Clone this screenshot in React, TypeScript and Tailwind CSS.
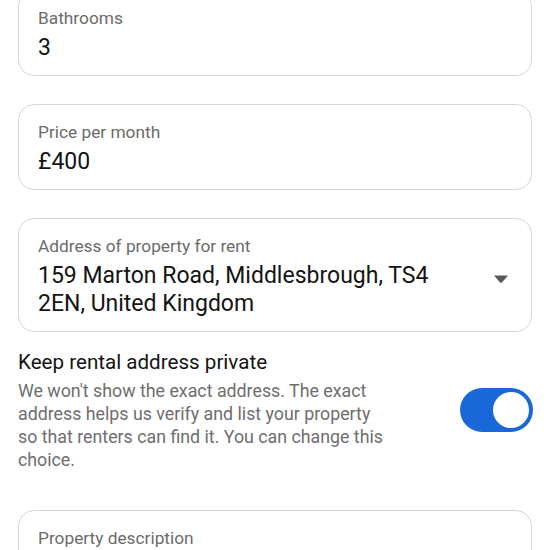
import React from 'react'

function Field({ label, value, dropdown }: { label: string; value: string; dropdown?: boolean }) {
  return (
    <div className="flex items-center rounded-[16px] border border-[#d6d6d6] bg-white pl-[19px] pr-[22px] pt-[16px] pb-[13px]">
      <div className="flex-1 min-w-0 pr-[40px]">
        <div className="text-[17.3px] leading-[22px] text-[#6b6b6b]">{label}</div>
        <div className="mt-[5px] text-[23px] leading-[28px] text-[#141414]">{value}</div>
      </div>
      {dropdown && (
        <svg width="16" height="10" viewBox="0 0 16 10" className="shrink-0 mt-[4px]">
          <path d="M1 1.5 H15 L9.2 8.2 Q8 9.4 6.8 8.2 Z" fill="#5a5a5a" />
        </svg>
      )}
    </div>
  )
}

export default function App() {
  return (
    <div className="w-[550px] h-[550px] overflow-hidden bg-white" style={{ fontFamily: 'Roboto, "Noto Sans", sans-serif' }}>
      <div className="-mt-[10px] px-[18px] flex flex-col">
        <Field label="Bathrooms" value="3" />
        <div className="mt-[28px]">
          <Field label="Price per month" value="£400" />
        </div>
        <div className="mt-[28px]">
          <Field label="Address of property for rent" value="159 Marton Road, Middlesbrough, TS4 2EN, United Kingdom" dropdown />
        </div>

        {/* Privacy toggle */}
        <div className="mt-[17px] flex items-center">
          <div className="w-[372px]">
            <div className="text-[20.6px] leading-[26px] text-[#141414]">Keep rental address private</div>
            <p className="mt-[4px] text-[17.8px] leading-[23px] text-[#6e6e6e]">
              We won't show the exact address. The exact address helps us verify and list your property so that renters can find it. You can change this choice.
            </p>
          </div>
          <div className="ml-auto mr-[-1px] flex h-[44px] w-[73px] items-center justify-end rounded-full bg-[#1a67d8] pr-[4px]">
            <div className="h-[36px] w-[36px] rounded-full bg-white" />
          </div>
        </div>

        <div className="mt-[39px] rounded-[16px] border border-[#d6d6d6] bg-white pl-[19px] pr-[22px] pt-[16px] pb-[13px]">
          <div className="text-[17.3px] leading-[22px] text-[#6b6b6b]">Property description</div>
          <div className="mt-[5px] h-[60px]" />
        </div>
      </div>
    </div>
  )
}
